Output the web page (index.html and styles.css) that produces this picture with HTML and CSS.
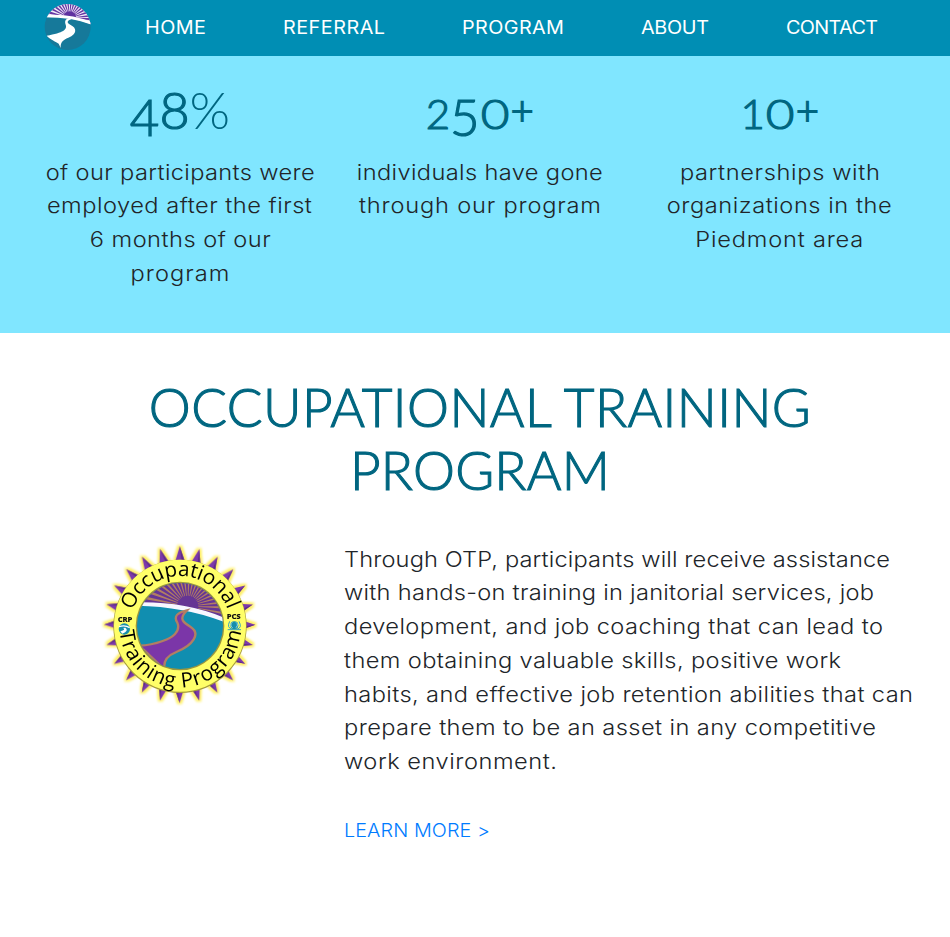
FILE: index.html
```html
<!DOCTYPE html>
<html lang="en">
<head>
<meta charset="utf-8">
<title>Occupational Training Program</title>
<link rel="stylesheet" href="styles.css">
</head>
<body>
<nav class="navbar">
  <a class="brand" href="#">
    <svg class="logo" viewBox="42 6 144 144" aria-hidden="true">
      <defs><clipPath id="logo-clip"><circle cx="113" cy="81" r="69"/></clipPath>
      <clipPath id="logo-sky"><path d="M40 50Q120 48 184 73V0H40Z"/></clipPath></defs>
      <g clip-path="url(#logo-clip)">
        <rect x="40" y="0" width="150" height="160" fill="#16799a"/>
        <g clip-path="url(#logo-sky)">
          <rect x="40" y="0" width="150" height="80" fill="#efe9f7"/>
          <circle cx="119" cy="54" r="45" fill="none" stroke="#6737a3" stroke-width="90" stroke-dasharray="4.7 4.13"/>
          <circle cx="119" cy="54" r="20" fill="#6031a0"/>
        </g>
        <path d="M40 46Q116 38 184 66V74Q130 52 40 52Z" fill="#fff"/>
        <path d="M121 54C107 56 103 62 107 74C112 88 101 98 50 107C62 119 78 125 86 131L92 144C91 127 99 119 115 113C143 102 140 83 122 75C108 68 112 62 124 58Z" fill="#fff"/>
      </g>
    </svg>
  </a>
  <ul class="menu">
    <li><a href="#" data-width="61">HOME</a></li>
    <li><a href="#" data-width="102">REFERRAL</a></li>
    <li><a href="#" data-width="102">PROGRAM</a></li>
    <li><a href="#" data-width="68">ABOUT</a></li>
    <li><a href="#" data-width="92">CONTACT</a></li>
  </ul>
</nav>
<section class="stats">
  <div class="stat">
    <h2 class="figure"><span class="low">4</span><span class="eight">8</span><span class="percent">%</span></h2>
    <p><span data-width="269">of our participants were</span> <span data-width="265">employed after the first</span> <span data-width="181">6 months of our</span> <span data-width="99">program</span></p>
  </div>
  <div class="stat">
    <h2 class="figure"><span class="small">2</span><span class="low">5</span><span class="small zero">0</span><span class="plus">+</span></h2>
    <p><span data-width="246">individuals have gone</span> <span data-width="242">through our program</span></p>
  </div>
  <div class="stat">
    <h2 class="figure"><span class="small">1</span><span class="small zero">0</span><span class="plus">+</span></h2>
    <p><span data-width="200">partnerships with</span> <span data-width="225">organizations in the</span> <span data-width="168">Piedmont area</span></p>
  </div>
</section>
<main class="program">
  <h1><span data-width="662">OCCUPATIONAL TRAINING</span> <span data-width="260">PROGRAM</span></h1>
  <div class="details">
    <div class="badge-column">
      <svg class="badge" viewBox="0 0 510 510" role="img" aria-label="Occupational Training Program seal">
        <defs>
          <filter id="glow" x="-20%" y="-20%" width="140%" height="140%" color-interpolation-filters="sRGB"><feMorphology in="SourceAlpha" operator="dilate" radius="5"/><feGaussianBlur stdDeviation="3.5"/><feComponentTransfer result="halo"><feFuncA type="linear" slope="1.1"/></feComponentTransfer><feFlood flood-color="#fff170"/><feComposite in2="halo" operator="in" result="colour"/><feMerge><feMergeNode in="colour"/><feMergeNode in="SourceGraphic"/></feMerge></filter>
          <g id="spike"><path d="M256 22L241 70H273Z" fill="#7c38ab"/><path d="M256 22L263 70H273Z" fill="#5c2987"/></g>
          <g id="spikes6"><use href="#spike"/><use href="#spike" transform="rotate(15 256 257)"/><use href="#spike" transform="rotate(30 256 257)"/><use href="#spike" transform="rotate(45 256 257)"/><use href="#spike" transform="rotate(60 256 257)"/><use href="#spike" transform="rotate(75 256 257)"/></g>
          <clipPath id="scene"><circle cx="255" cy="261" r="129"/></clipPath>
          <clipPath id="sky"><path d="M120 196Q260 190 390 244V120H120Z"/></clipPath>
          <path id="top-arc" d="M113.300 214.600A150 150 0 0 1 401.500 224.700"/>
          <path id="bottom-arc" d="M74 277A182 182 0 0 0 437 276"/>
        </defs>
        <g filter="url(#glow)" transform="translate(254 257) scale(.965 1) translate(-256 -257)">
          <use href="#spikes6"/><use href="#spikes6" transform="rotate(90 256 257)"/><use href="#spikes6" transform="rotate(180 256 257)"/><use href="#spikes6" transform="rotate(270 256 257)"/>
        </g>
        <circle cx="255" cy="262" r="200" fill="#a59b3b"/>
        <circle cx="255" cy="260" r="198" fill="#ffff68"/>
        <circle cx="255" cy="261" r="133" fill="#9b963f"/>
        <g clip-path="url(#scene)">
          <rect x="120" y="120" width="270" height="280" fill="#108eb0"/>
          <g clip-path="url(#sky)">
            <rect x="120" y="120" width="270" height="140" fill="#653594"/>
            <circle cx="278" cy="202" r="85" fill="none" stroke="#b17e63" stroke-width="170" stroke-dasharray="5.5 7.86"/>
            <circle cx="278" cy="202" r="32" fill="#653594"/>
          </g>
          <path d="M120 190Q270 186 390 237V250Q270 202 120 200Z" fill="#f7f7ff"/>
          <path d="M276 214C247 220 235 232 247 251C258 278 232 296 203 306C181 314 157 319 133 320L208 391C204 366 219 349 244 339C294 319 319 284 286 263C264 250 250 239 276 214Z" fill="#7b36a8" stroke="#b17e63" stroke-width="7"/>
        </g>
        <g class="seal-text">
          <text><textPath href="#top-arc" textLength="374">Occupational</textPath></text>
          <text><textPath href="#bottom-arc" textLength="544">Training Program</textPath></text>
        </g>
        <text class="seal-small" x="68" y="249" textLength="44">CRP</text>
        <text class="seal-small" x="395" y="240" textLength="42">PCS</text>
        <circle cx="88" cy="270" r="17" fill="#168eac"/><path d="M72 263Q90 257 104 266" fill="none" stroke="#fff" stroke-width="4"/><path d="M91 266Q103 275 82 284L76 277Q94 272 84 267Z" fill="#fff"/>
        <circle cx="418" cy="259" r="12" fill="#168eac"/><path d="M404 247Q394 267 412 271M432 247Q443 267 425 271M398 272H438" fill="none" stroke="#35a3bf" stroke-width="3"/><path d="M412 250A9 9 0 0 0 413 266M423 250A9 9 0 0 1 422 266" stroke="#dff" stroke-width="2" fill="none"/>
      </svg>
    </div>
    <div class="copy">
      <p><span data-width="546">Through OTP, participants will receive assistance</span> <span data-width="530">with hands-on training in janitorial services, job</span> <span data-width="539">development, and job coaching that can lead to</span> <span data-width="497">them obtaining valuable skills, positive work</span> <span data-width="569">habits, and effective job retention abilities that can</span> <span data-width="532">prepare them to be an asset in any competitive</span> <span data-width="213">work environment.</span></p>
      <a class="learn-more" href="#" data-width="146">LEARN MORE &gt;</a>
    </div>
  </div>
</main>
<script src="tracking.js"></script>
</body>
</html>
```
FILE: styles.css
```css
* { box-sizing: border-box; }
body { margin: 0; background: #fff; color: #212529; font: 300 21.5px/33.75px Inter, "Open Sans", sans-serif; }
a { text-decoration: none; }
[data-width] { white-space: nowrap; display: inline-block; }
.navbar { height: 56px; background: #008eb4; display: flex; align-items: center; padding-left: 44px; }
.brand { width: 48px; height: 48px; margin: -4px 53px 0 0; }
.logo { display: block; width: 48px; height: 48px; }
.menu { list-style: none; margin: 0; padding: 0; display: grid; grid-template-columns: 138px 179px 179px 145px 92px; }
.menu a { color: #fff; font-size: 18px; font-weight: 400; line-height: 54px; }
.stats { height: 277px; background: #80e6ff; padding: 22px 20px 0 30px; display: grid; grid-template-columns: repeat(3, 300px); text-align: center; }
.stat p { margin: 0; padding-top: .6px; }
.stat p span, .copy p span { display: block; width: fit-content; }
.stat p span { margin: 0 auto; }
.figure { margin: 0 0 14px; height: 63px; color: #006680; font: 400 52px/63px Lato, sans-serif; display: flex; justify-content: center; }
.figure span { line-height: 63px; height: 63px; }
.small { font-size: 42px; transform: translateY(4px); }
.low { font-size: 51px; transform: translateY(7px); }
.zero { transform: translateY(4px) scaleX(1.18); margin: 0 3px; }
.percent { font-weight: 300; }
.plus { font-size: 42px; transform: translateY(1px); }
.figure .low, .figure .small, .figure .eight { font-weight: 300; -webkit-text-stroke: 1.2px #006680; }
h1 { margin: 0; color: #006680; font: 300 53px/63px Lato, sans-serif; text-align: center; -webkit-text-stroke: 1.1px #006680; }
h1 span { display: block; width: fit-content; margin: 0 auto; }
.program { padding: 42px 20px 0 30px; }
.details { display: grid; grid-template-columns: 300px 1fr; padding-top: 39px; }
.badge-column { display: flex; justify-content: center; align-items: flex-start; }
.badge { width: 170px; height: 170px; margin-top: -1px; }
.copy { padding: 2.6px 0 0 14px; }
.copy p { margin: 0 0 34.4px; }
.learn-more { color: #007bff; font-size: 18px; }
.seal-text { font: 400 62px "Open Sans", sans-serif; fill: #000; }
.seal-small { font: 800 23px "Open Sans", sans-serif; fill: #111; }
```
FILE: tracking.js
```js
// Widens the letters slightly, then spaces them so each line fills its measure.
document.fonts.ready.then(() => {
  document.querySelectorAll('[data-width]').forEach((line) => {
    const centred = line.closest('.stat, h1');
    const stretch = line.closest('h1') ? 1 : 1.1;
    const natural = line.getBoundingClientRect().width;
    const spacing = (Number(line.dataset.width) / stretch - natural) / (line.textContent.length - 1);
    line.style.letterSpacing = spacing + 'px';
    line.style.transformOrigin = centred ? 'center' : 'left';
    line.style.transform = `scaleX(${stretch})`;
  });
});
```
